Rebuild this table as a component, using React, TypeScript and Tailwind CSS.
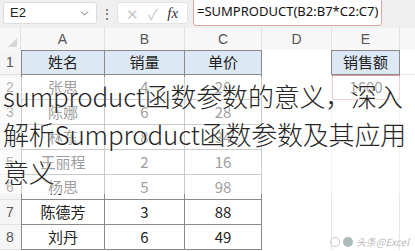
import { ChevronDown } from 'lucide-react'

const COLS = ['A', 'B', 'C', 'D', 'E']

// grid column widths (row-number column first)
const GRID = 'grid grid-cols-[21px_84px_80px_77px_70px_68px_1fr]'

const ROWS: Array<[string, string, string, string]> = [
  ['张思', '4', '20', '1600'],
  ['陈娜', '6', '28', ''],
  ['林东', '8', '34', ''],
  ['王丽程', '2', '16', ''],
  ['杨思', '5', '98', ''],
  ['陈德芳', '3', '88', ''],
  ['刘丹', '6', '49', ''],
]

function Cell({ children, head, className = '' }: { children?: React.ReactNode; head?: boolean; className?: string }) {
  return (
    <div
      className={`h-[25px] flex items-center justify-center border-r border-b border-[#8a8a8a] text-[15px] text-[#222] ${head ? 'bg-[#dce8f4]' : 'bg-white'} ${className}`}
    >
      {children}
    </div>
  )
}

export default function App() {
  return (
    <div className="relative w-[415px] h-[251px] overflow-hidden bg-white font-['Noto_Sans_CJK_SC','Liberation_Sans',sans-serif]">

      {/* Formula bar */}
      <div className="h-[28px] bg-[#efefef] flex items-start pt-[2px] pl-[3px]">
        <div className="w-[94px] h-[22px] bg-white border border-[#dcdcdc] rounded-[3px] flex items-center justify-between pl-[6px] pr-[5px]">
          <span className="text-[13px] text-[#222] font-['Liberation_Sans',sans-serif]">E2</span>
          <ChevronDown size={13} strokeWidth={1.6} className="text-[#555]" />
        </div>
        <span className="w-[20px] text-center text-[14px] text-[#666] leading-[22px]">⋮</span>
        <div className="w-[71px] h-[22px] bg-white border border-[#e2e2e2] rounded-[3px] flex items-center gap-[9px] pl-[8px]">
          <span className="text-[15px] text-[#c8c8c8] leading-none">✕</span>
          <span className="text-[15px] text-[#c8c8c8] leading-none">✓</span>
          <span className="text-[15px] italic text-[#333] font-['Liberation_Serif',serif] leading-none">fx</span>
        </div>
        <div className="ml-[5px] -mt-[4px] w-[189px] h-[28px] bg-white border border-[#e3a4a4] rounded-[3px] flex items-center pl-[3px]">
          <span className="text-[13px] text-[#111] font-['Noto_Sans','Liberation_Sans',sans-serif]">=SUMPRODUCT(B2:B7*C2:C7)</span>
        </div>
      </div>

      {/* Column headers */}
      <div className={`${GRID} h-[22px] bg-[#f7f7f7]`}>
        <div className="relative border-r border-[#e2e2e2]">
          <div className="absolute right-[3px] bottom-[3px] w-0 h-0 border-l-[9px] border-l-transparent border-b-[9px] border-b-[#d6d6d6]" />
        </div>
        {COLS.map(c => (
          <div key={c} className="flex items-center justify-center border-r border-[#e2e2e2] text-[14px] text-[#555] font-['Liberation_Sans',sans-serif]">
            {c}
          </div>
        ))}
        <div />
      </div>

      {/* Row 1 (headers) */}
      <div className={GRID}>
        <div className="h-[25px] bg-[#f5f5f5] border-b border-[#e2e2e2] flex items-center pl-[6px] text-[14px] text-[#555] font-['Liberation_Sans',sans-serif]">1</div>
        <Cell head className="border-l border-t">姓名</Cell>
        <Cell head className="border-t">销量</Cell>
        <Cell head className="border-t">单价</Cell>
        <div className="border-r border-[#8a8a8a]" />
        <Cell head className="border-t">销售额</Cell>
        <div className="border-b border-[#e6e6e6]" />
      </div>

      {/* Data rows */}
      {ROWS.map((r, i) => (
        <div key={i} className={GRID}>
          <div className="h-[25px] bg-[#f5f5f5] border-b border-[#e2e2e2] flex items-center pl-[6px] text-[14px] text-[#555] font-['Liberation_Sans',sans-serif]">
            {i + 2}
          </div>
          <Cell className="border-l">{r[0]}</Cell>
          <Cell>{r[1]}</Cell>
          <Cell>{r[2]}</Cell>
          <div className="border-r border-[#e6e6e6]" />
          {i === 0 ? (
            <div className="h-[25px] bg-white border border-[#e2a0a0] flex items-center justify-center text-[15px] text-[#222]">{r[3]}</div>
          ) : (
            <div className="border-r border-[#e6e6e6]" />
          )}
          <div />
        </div>
      ))}

      {/* Title overlay */}
      <div className="absolute left-0 right-0 top-[77px] h-[117px] bg-white/55 pl-[3px]">
        <p className="text-[26px] leading-[38px] font-light text-[#262626] tracking-[-0.2px] [text-shadow:0_0_2px_#fff,0_0_2px_#fff]">
          sumproduct函数参数的意义，深入解析Sumproduct函数参数及其应用意义
        </p>
      </div>

      {/* Watermark */}
      <div className="absolute right-[6px] bottom-[2px] flex items-center gap-[3px] text-[10px] text-[#aaa] opacity-80">
        <span className="w-[10px] h-[10px] rounded-full border border-[#bbb]" />
        <span className="w-[10px] h-[10px] rounded-full bg-[#9aa]" />
        <span className="italic">头条@Excel</span>
      </div>
    </div>
  )
}
